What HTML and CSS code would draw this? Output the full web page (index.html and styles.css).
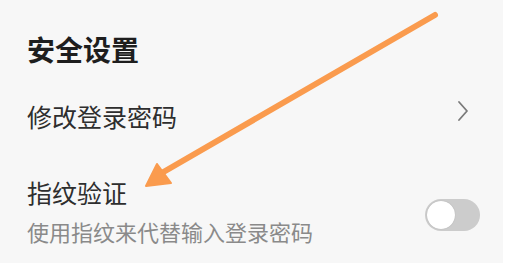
FILE: index.html
```html
<!DOCTYPE html>
<html lang="zh-CN">
<head>
<meta charset="utf-8">
<link rel="stylesheet" href="styles.css">
</head>
<body>
<div class="panel">
  <h2 class="title">安全设置</h2>
  <div class="row row-link">
    <span class="item-label">修改登录密码</span>
    <svg class="chevron" width="12" height="22" viewBox="0 0 12 22"><path d="M2 2 L10 11 L2 20" fill="none" stroke="#7a7a7a" stroke-width="1.8" stroke-linecap="round" stroke-linejoin="round"/></svg>
  </div>
  <div class="row row-toggle">
    <div class="item-text">
      <span class="item-label">指纹验证</span>
      <span class="item-desc">使用指纹来代替输入登录密码</span>
    </div>
    <div class="switch"><div class="knob"></div></div>
  </div>
  <svg class="annotation" width="503" height="263" viewBox="0 0 503 263">
    <line x1="435" y1="15" x2="160" y2="174" stroke="#fa9b4e" stroke-width="6" stroke-linecap="round"/>
    <polygon points="146,186 157,164 171,183" fill="#fa9b4e" stroke="#fa9b4e" stroke-width="2" stroke-linejoin="round"/>
  </svg>
</div>
</body>
</html>
```
FILE: styles.css
```css
html, body {
  margin: 0;
  padding: 0;
  background: #ffffff;
}
body {
  width: 525px;
  height: 263px;
  overflow: hidden;
  font-family: "Noto Sans CJK SC", "Noto Sans", sans-serif;
}
.panel {
  position: relative;
  width: 503px;
  height: 263px;
  box-sizing: border-box;
  background: #f7f7f7;
  padding: 35px 0 0 27px;
  display: flex;
  flex-direction: column;
}
.title {
  margin: 0;
  font-size: 28px;
  line-height: 28px;
  font-weight: 700;
  color: #1e1e1e;
}
.row {
  display: flex;
}
.row-link {
  margin-top: 41px;
  padding-right: 34px;
  justify-content: space-between;
  align-items: flex-start;
}
.item-label {
  font-size: 25px;
  line-height: 25px;
  color: #2e2e2e;
}
.chevron {
  display: block;
  margin-top: -4px;
}
.row-toggle {
  margin-top: 51px;
  padding-right: 23px;
  justify-content: space-between;
  align-items: flex-start;
}
.item-text {
  display: flex;
  flex-direction: column;
  gap: 15px;
}
.item-desc {
  font-size: 22px;
  line-height: 22px;
  color: #8a8a8a;
}
.switch {
  margin-top: 19px;
  width: 55px;
  height: 32px;
  border-radius: 16px;
  background: #cccccc;
  box-sizing: border-box;
  padding: 2px;
}
.knob {
  width: 28px;
  height: 28px;
  border-radius: 50%;
  background: #ffffff;
  box-shadow: 0 0 1px rgba(0,0,0,0.25);
}
.annotation {
  position: absolute;
  left: 0;
  top: 0;
  pointer-events: none;
}
```
